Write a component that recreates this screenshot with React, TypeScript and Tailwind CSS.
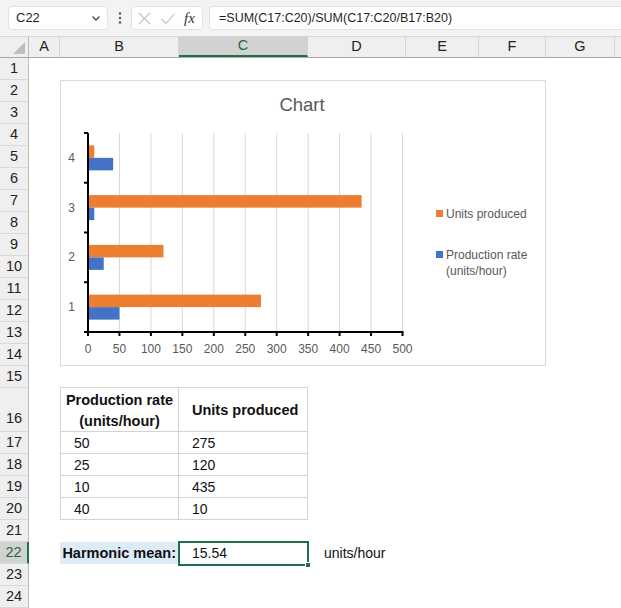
import React from "react";

const COLS = [
  { key: "A", w: "w-[31px]" },
  { key: "B", w: "w-[119px]" },
  { key: "C", w: "w-[129px]" },
  { key: "D", w: "w-[98px]" },
  { key: "E", w: "w-[73px]" },
  { key: "F", w: "w-[67px]" },
  { key: "G", w: "w-[69px]" },
];

const FONT = "font-['Liberation_Sans',Arial,sans-serif]";

function Chart() {
  const x0 = 28;
  const per = 31.45 / 50;
  const top = 53;
  const bottom = 252;
  const ch = (bottom - top) / 4;
  const data = [
    { cat: 1, rate: 50, units: 275 },
    { cat: 2, rate: 25, units: 120 },
    { cat: 3, rate: 10, units: 435 },
    { cat: 4, rate: 40, units: 10 },
  ];
  const ticks = Array.from({ length: 11 }, (_, i) => i * 50);
  const ff = "'Liberation Sans', Arial, sans-serif";
  return (
    <svg width="486" height="286" viewBox="0 0 486 286" className="block">
      <rect x="0.5" y="0.5" width="485" height="285" fill="white" stroke="#d9d9d9" />
      <text x="242" y="31" textAnchor="middle" fontSize="18.5" fill="#595959" fontFamily={ff}>
        Chart
      </text>
      {ticks.slice(1).map((t) => (
        <line key={t} x1={x0 + t * per} x2={x0 + t * per} y1={top} y2={bottom} stroke="#d9d9d9" strokeWidth="1" />
      ))}
      {data.map((d) => {
        const yc = bottom - (d.cat - 0.5) * ch;
        return (
          <g key={d.cat}>
            <rect x={x0} y={yc - 12.5} width={d.units * per} height={12.5} fill="#ed7d31" />
            <rect x={x0} y={yc} width={d.rate * per} height={12.5} fill="#4472c4" />
            <text x="15" y={yc + 4} textAnchor="end" fontSize="12" fill="#595959" fontFamily={ff}>
              {d.cat}
            </text>
          </g>
        );
      })}
      <line x1={x0} x2={x0} y1={top} y2={bottom + 1} stroke="#000" strokeWidth="2" />
      <line x1={x0 - 1} x2={x0 + 500 * per + 1} y1={bottom} y2={bottom} stroke="#000" strokeWidth="2" />
      {[0, 1, 2, 3, 4].map((i) => (
        <line key={i} x1={x0 - 4} x2={x0} y1={top + i * ch} y2={top + i * ch} stroke="#000" strokeWidth="2" />
      ))}
      {ticks.map((t) => (
        <g key={t}>
          <line x1={x0 + t * per} x2={x0 + t * per} y1={bottom} y2={bottom + 4} stroke="#000" strokeWidth="2" />
          <text x={x0 + t * per} y="273" textAnchor="middle" fontSize="12" fill="#595959" fontFamily={ff}>
            {t}
          </text>
        </g>
      ))}
      <rect x="376" y="130" width="7" height="7" fill="#ed7d31" />
      <text x="386" y="137.5" fontSize="12" fill="#595959" fontFamily={ff}>
        Units produced
      </text>
      <rect x="376" y="171" width="7" height="7" fill="#4472c4" />
      <text x="386" y="178.5" fontSize="12" fill="#595959" fontFamily={ff}>
        Production rate
      </text>
      <text x="386" y="195" fontSize="12" fill="#595959" fontFamily={ff}>
        (units/hour)
      </text>
    </svg>
  );
}

function TopBar() {
  return (
    <div className="h-[37px] bg-[#f3f3f3] border-b border-[#d6d6d6] flex items-center shrink-0">
      <div className="ml-[8px] w-[100px] h-[24px] bg-white rounded-[4px] border border-[#e3e3e3] flex items-center justify-between pl-[7px] pr-[6px]">
        <span className="text-[13px] text-[#1f1f1f]">C22</span>
        <svg width="10" height="10" viewBox="0 0 10 10">
          <path d="M1.5 3.5 L5 7 L8.5 3.5" fill="none" stroke="#444" strokeWidth="1.3" />
        </svg>
      </div>
      <div className="w-[23px] flex justify-center">
        <svg width="4" height="14" viewBox="0 0 4 14">
          <circle cx="2" cy="2.5" r="1.2" fill="#555" />
          <circle cx="2" cy="7" r="1.2" fill="#555" />
          <circle cx="2" cy="11.5" r="1.2" fill="#555" />
        </svg>
      </div>
      <div className="w-[72px] h-[24px] bg-white rounded-[4px] border border-[#e3e3e3] flex items-center pl-[5px]">
        <svg width="15" height="15" viewBox="0 0 15 15" className="mr-[8px]">
          <path d="M2 2 L13 13 M13 2 L2 13" stroke="#c2c2c2" strokeWidth="1.1" />
        </svg>
        <svg width="16" height="15" viewBox="0 0 16 15" className="mr-[8px]">
          <path d="M1.5 8 L6 12.5 L14.5 2.5" fill="none" stroke="#c2c2c2" strokeWidth="1.1" />
        </svg>
        <span className="font-['Liberation_Serif',serif] italic text-[15px] text-[#333] leading-none">fx</span>
      </div>
      <div className="ml-[6px] flex-1 h-[24px] bg-white rounded-l-[4px] border border-r-0 border-[#e3e3e3] flex items-center pl-[9px]">
        <span className="text-[12.5px] text-[#1f1f1f] whitespace-nowrap">=SUM(C17:C20)/SUM(C17:C20/B17:B20)</span>
      </div>
    </div>
  );
}

function HeaderRow() {
  return (
    <div className="h-[21px] flex shrink-0 bg-[#efefef] border-b border-[#a8a8a8]">
      <div className="w-[29px] h-full border-r border-[#bcbcbc] relative">
        <svg width="12" height="12" viewBox="0 0 12 12" className="absolute right-[3px] bottom-[3px]">
          <path d="M12 0 L12 12 L0 12 Z" fill="#bdbdbd" />
        </svg>
      </div>
      {COLS.map((c) => (
        <div
          key={c.key}
          className={`${c.w} h-full flex items-center justify-center text-[14.5px] border-r border-[#d4d4d4] ${
            c.key === "C" ? "bg-[#d2d2d2] text-[#1e6b41] border-b-2 border-b-[#1e7145]" : "text-[#222]"
          }`}
        >
          {c.key}
        </div>
      ))}
      <div className="flex-1 h-full" />
    </div>
  );
}

type CellMap = { [col: string]: React.ReactNode };

function Row({ n, h, cells, classes }: { n: number; h: string; cells?: CellMap; classes?: { [col: string]: string } }) {
  const selected = n === 22;
  return (
    <div className={`${h} flex shrink-0`}>
      <div
        className={`w-[29px] h-full flex justify-center text-[14.5px] border-b border-[#d9d9d9] ${
          selected
            ? "bg-[#d2d2d2] text-[#1e6b41] border-r-2 border-r-[#1e7145]"
            : "bg-[#efefef] text-[#222] border-r border-r-[#bcbcbc]"
        } ${n === 16 ? "items-end pb-[1px]" : "items-center"}`}
      >
        {n}
      </div>
      {COLS.map((c) => (
        <div key={c.key} className={`${c.w} h-full relative ${classes?.[c.key] ?? ""}`}>
          {cells?.[c.key]}
        </div>
      ))}
      <div className="flex-1 h-full" />
    </div>
  );
}

export default function App() {
  const rows: number[] = Array.from({ length: 24 }, (_, i) => i + 1);
  const tableB = "border-l border-r border-b border-[#d4d4d4]";
  const tableC = "border-r border-b border-[#d4d4d4]";
  const num = (v: string) => (
    <div className="h-full flex items-center pl-[13px] pt-[1px] text-[14px] text-[#111]">{v}</div>
  );
  const values: { [n: number]: [string, string] } = {
    17: ["50", "275"],
    18: ["25", "120"],
    19: ["10", "435"],
    20: ["40", "10"],
  };
  return (
    <div className={`w-[621px] h-[608px] overflow-hidden bg-white flex flex-col ${FONT}`}>
      <TopBar />
      <HeaderRow />
      <div className="relative flex-1 flex flex-col">
        {rows.map((n) => {
          if (n === 15) {
            return (
              <Row key={n} n={n} h="h-[22px]" classes={{ B: "border-b border-[#d4d4d4]", C: "border-b border-[#d4d4d4]" }} />
            );
          }
          if (n === 16) {
            return (
              <Row
                key={n}
                n={n}
                h="h-[44px]"
                classes={{ B: tableB, C: tableC }}
                cells={{
                  B: (
                    <div className="h-full flex flex-col items-center justify-center pt-[2px] text-[14.5px] font-bold text-[#111] leading-[21px]">
                      <span>Production rate</span>
                      <span>(units/hour)</span>
                    </div>
                  ),
                  C: (
                    <div className="h-full flex items-center pl-[13px] pt-[2px] text-[14.5px] font-bold text-[#111]">Units produced</div>
                  ),
                }}
              />
            );
          }
          if (values[n]) {
            return (
              <Row
                key={n}
                n={n}
                h="h-[22px]"
                classes={{ B: tableB, C: tableC }}
                cells={{ B: num(values[n][0]), C: num(values[n][1]) }}
              />
            );
          }
          if (n === 22) {
            return (
              <Row
                key={n}
                n={n}
                h="h-[22px]"
                classes={{ B: "bg-[#ddebf7]" }}
                cells={{
                  B: (
                    <div className="h-full flex items-center justify-end pr-[3px] pt-[1px] text-[14.5px] font-bold text-[#111]">
                      Harmonic mean:
                    </div>
                  ),
                  C: (
                    <>
                      {num("15.54")}
                      <div className="absolute left-[-1px] top-[-1px] right-[-1px] bottom-[-2px] border-2 border-[#1e7145]" />
                      <div className="absolute right-[-3px] bottom-[-4px] w-[6px] h-[6px] bg-[#1e7145] border border-white" />
                    </>
                  ),
                  D: <div className="h-full flex items-center pl-[16px] pt-[1px] text-[14px] text-[#111]">units/hour</div>,
                }}
              />
            );
          }
          return <Row key={n} n={n} h="h-[22px]" />;
        })}
        <div className="absolute left-[60px] top-[22px]">
          <Chart />
        </div>
      </div>
    </div>
  );
}
